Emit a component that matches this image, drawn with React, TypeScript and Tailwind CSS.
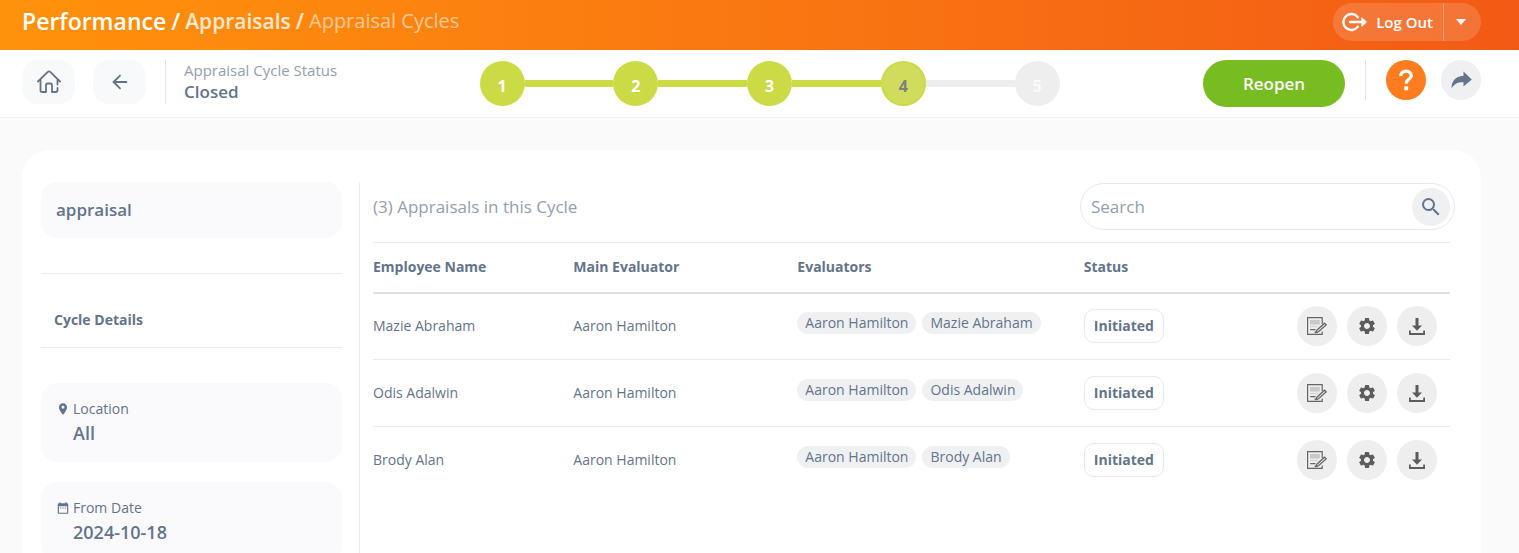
import type { ReactNode } from "react";
import { ArrowLeft } from "lucide-react";
import { MdDateRange, MdLocationOn, MdSearch, MdSettings } from "react-icons/md";

const APPRAISALS = [
    { id: 1, name: "Mazie Abraham", main: "Aaron Hamilton", evaluators: ["Aaron Hamilton", "Mazie Abraham"], status: "Initiated" },
    { id: 2, name: "Odis Adalwin", main: "Aaron Hamilton", evaluators: ["Aaron Hamilton", "Odis Adalwin"], status: "Initiated" },
    { id: 3, name: "Brody Alan", main: "Aaron Hamilton", evaluators: ["Aaron Hamilton", "Brody Alan"], status: "Initiated" },
];

const STEPS = [1, 2, 3, 4, 5];
const CURRENT_STEP = 4;

const HomeIcon = () => (
    <svg viewBox="0 0 24 24" className="h-6 w-6" fill="none" stroke="currentColor" strokeWidth="1.8" strokeLinecap="round" strokeLinejoin="round">
        <path d="M1 11.500 10.800 1.900Q12 .900 13.200 1.900L23 11.500" />
        <path d="M3.500 10V20.500Q3.500 22 5.500 22H9V15.500Q9 13.500 10.500 13.500H13.500Q15 13.500 15 15.500V22H18.500Q20.500 22 20.500 20V17.800M20.500 14.500V10" />
    </svg>
);

const LogOutIcon = () => (
    <svg viewBox="0 0 26 20" className="h-5 w-[26px]" fill="none" stroke="currentColor" strokeWidth="2.4" strokeLinecap="round" strokeLinejoin="round">
        <path d="M15.800 5.200A8 8 0 1 0 15.800 14.800" />
        <path d="M8 10H20" />
        <path d="M20 6.300 24 10 20 13.700Z" fill="currentColor" strokeWidth="1.5" />
    </svg>
);

const ShareIcon = () => (
    <svg viewBox="0 0 21 18" className="h-[18px] w-[21px]" fill="currentColor">
        <path d="M12.500 .500 20.800 8.500 12.500 15.500V11.300C7.500 11 3.500 12.500.600 17.200.500 10.500 4 5.300 12.500 4.800Z" />
    </svg>
);

const QuestionIcon = () => (
    <svg viewBox="0 0 16 22" className="h-[22px] w-4" fill="none" stroke="currentColor">
        <path d="M2.700 7.200C2.400 4 5 2.200 8 2.200S13.500 4 13.300 6.800C13 10 8.200 10.500 8.200 14.700" strokeWidth="3.200" />
        <path d="M8.200 17.300V21.300" strokeWidth="3.800" />
    </svg>
);

const FormIcon = () => (
    <svg viewBox="0 0 20 18" className="h-[18px] w-5" fill="none" stroke="#666" strokeWidth="1.2">
        <path d="M15.200 7V.600H.600V17.400H15.200V14.500" />
        <path d="M3 3H12.800V7.500H3Z" fill="#c8c8c8" stroke="none" />
        <path d="M3 9.500H11.500" stroke="#d4d4d4" />
        <path d="M3.200 12.700H8.500M7.500 15.200H11" />
        <path d="M9.800 13.200 17.500 6.200 19.200 7.900 11.500 14.800 9 15.500Z" fill="#ddd" />
    </svg>
);

const DownloadIcon = () => (
    <svg viewBox="0 0 16 17" className="h-[17px] w-4" fill="currentColor">
        <path d="M6.500 0H9.500V7.500H13L8 12.700 3 7.500H6.500Z" />
        <path d="M0 12.500H1.800V15H14.200V12.500H16V17H0Z" />
    </svg>
);

const Header = () => (
    <header className="flex h-[50px] shrink-0 items-start justify-between bg-linear-to-r from-[#ff920b] to-[#f35a15] pr-[38px] pl-[22px]">
        <nav aria-label="Breadcrumb" className="flex items-center gap-[5px] pt-[7px] leading-7 font-semibold">
            <a href="#performance" className="text-[23px] text-white">Performance</a>
            <span className="text-[23px] text-white">/</span>
            <a href="#appraisals" className="text-[21px] text-white/80">Appraisals</a>
            <span className="text-[21px] text-white/80">/</span>
            <a href="#cycles" className="text-[20px] font-medium text-white/55">Appraisal Cycles</a>
        </nav>
        <div className="mt-[3px] flex h-[38px] overflow-hidden rounded-full bg-white/15 text-white">
            <button className="flex items-center gap-2 pr-2.5 pl-[9px] text-[15px] font-semibold">
                <LogOutIcon />
                Log Out
            </button>
            <button aria-label="Account options" className="flex w-[38px] items-center border-l border-white/30 pl-3">
                <svg viewBox="0 0 10 6" className="h-1.5 w-2.5" fill="currentColor"><path d="M0 0H10L5 6Z" /></svg>
            </button>
        </div>
    </header>
);

const Stepper = () => (
    <ol className="mt-[11px] ml-9 flex w-[580px] items-center">
        {STEPS.map((step) => {
            const isDone = step < CURRENT_STEP;
            const isCurrent = step === CURRENT_STEP;

            return (
                <li key={step} className={`flex items-center ${step > 1 ? "flex-1" : ""}`}>
                    {step > 1 && <span className={`h-[7px] flex-1 ${isDone || isCurrent ? "bg-[#cbdb45]" : "bg-[#eee]"}`} />}
                    <span
                        className={`flex h-[45px] w-[45px] items-center justify-center rounded-full pt-1 text-base font-bold ${isDone
                            ? "bg-[#cbdb45] text-white"
                            : isCurrent
                                ? "border-2 border-[#cbdb45] bg-[#d0dd5c] text-[#808080]"
                                : "bg-[#eee] text-[#fafafa]"
                            }`}
                    >
                        {step}
                    </span>
                </li>
            );
        })}
    </ol>
);

const Toolbar = () => (
    <div className="flex h-[68px] shrink-0 items-start border-b border-[#f0f0f0] bg-white pr-[38px] pl-[22px]">
        <div className="mt-2.5 flex flex-1 items-center">
            <button aria-label="Home" className="flex h-11 w-[53px] items-center justify-center rounded-2xl bg-[#f8f9fb]">
                <HomeIcon />
            </button>
            <button aria-label="Back" className="ml-[18px] flex h-11 w-[53px] items-center justify-center rounded-2xl bg-[#f8f9fb]">
                <ArrowLeft className="h-[22px] w-[22px]" />
            </button>
            <div className="ml-[19px] h-11 border-l border-[#e4e5e8] pl-[18px]">
                <p className="text-[15px] leading-5 text-[#93a0ae]">Appraisal Cycle Status</p>
                <p className="text-[17px] leading-6 font-semibold">Closed</p>
            </div>
        </div>
        <Stepper />
        <div className="mt-2.5 flex flex-1 items-start justify-end">
            <button className="h-[47px] w-[142px] rounded-full bg-[#77bc21] text-[17px] font-semibold text-white">Reopen</button>
            <div className="ml-5 flex gap-[15px] border-l border-[#e4e5e8] pl-5">
                <button aria-label="Help" className="flex h-10 w-10 items-center justify-center rounded-full bg-[#ff7d1e] text-white">
                    <QuestionIcon />
                </button>
                <button aria-label="Share" className="flex h-10 w-10 items-center justify-center rounded-full bg-[#eff0f2]">
                    <ShareIcon />
                </button>
            </div>
        </div>
    </div>
);

const DetailCard = ({ icon, label, value }: { icon: ReactNode; label: string; value: string }) => (
    <div className="mb-5 h-[79px] rounded-2xl bg-[#fafafc] pt-4 pl-[15px]">
        <div className="flex items-center gap-[3px] text-sm leading-5">
            {icon}
            {label}
        </div>
        <p className="ml-[17px] text-lg leading-7 font-semibold">{value}</p>
    </div>
);

const Sidebar = () => (
    <aside className="w-[301px] shrink-0">
        <div className="mb-[35px] rounded-2xl bg-[#fafafc] px-[15px] py-4 text-[17px] leading-6 font-semibold">appraisal</div>
        <h2 className="mb-[35px] border-y border-[#ededf0] px-[13px] pt-9 pb-[17px] text-sm leading-5 font-bold">Cycle Details</h2>
        <DetailCard icon={<MdLocationOn className="h-3.5 w-3.5" />} label="Location" value="All" />
        <DetailCard icon={<MdDateRange className="h-3.5 w-3.5" />} label="From Date" value="2024-10-18" />
    </aside>
);

const RoundButton = ({ label, children }: { label: string; children: ReactNode }) => (
    <button aria-label={label} className="flex h-10 w-10 items-center justify-center rounded-full bg-[#eee] text-[#5c5c5c]">
        {children}
    </button>
);

const AppraisalTable = () => (
    <table className="w-full table-fixed text-left text-sm">
        <colgroup>
            <col className="w-[18.6%]" />
            <col className="w-[20.8%]" />
            <col className="w-[26.6%]" />
            <col />
            <col className="w-[153px]" />
        </colgroup>
        <thead>
            <tr className="h-[50px] border-t border-b-2 border-t-[#e8e9ed] border-b-[#dee0e5]">
                <th className="font-bold">Employee Name</th>
                <th className="font-bold">Main Evaluator</th>
                <th className="font-bold">Evaluators</th>
                <th className="font-bold">Status</th>
                <th aria-label="Actions" />
            </tr>
        </thead>
        <tbody>
            {APPRAISALS.map((row) => (
                <tr key={row.id} className="h-[67px] border-b border-[#e8e9ed] last:border-b-0">
                    <td>{row.name}</td>
                    <td>{row.main}</td>
                    <td>
                        <div className="mb-1.5 flex gap-1.5">
                            {row.evaluators.map((person) => (
                                <span key={person} className="rounded-full bg-[#eff0f2] px-2 leading-[22px] whitespace-nowrap">{person}</span>
                            ))}
                        </div>
                    </td>
                    <td>
                        <span className="inline-flex h-[34px] items-center rounded-[10px] border border-[#e8e8f0] px-[9px] font-bold">{row.status}</span>
                    </td>
                    <td>
                        <div className="flex gap-2.5">
                            <RoundButton label="Open form"><FormIcon /></RoundButton>
                            <RoundButton label="Settings"><MdSettings className="h-5 w-5" /></RoundButton>
                            <RoundButton label="Download"><DownloadIcon /></RoundButton>
                        </div>
                    </td>
                </tr>
            ))}
        </tbody>
    </table>
);

const App = () => {
    return (
        <div className="flex h-screen flex-col overflow-hidden bg-[#fafafa] font-['Open_Sans',sans-serif] text-[#64748b]">
            <Header />
            <Toolbar />
            <main className="mt-8 mr-[38px] ml-[22px] flex min-h-0 flex-1 overflow-hidden rounded-t-[28px] bg-white pt-8 pr-[26px] pl-[19px]">
                <Sidebar />
                <section className="ml-[17px] flex-1 border-l border-[#ededf0] pl-[13px]">
                    <div className="mb-3 flex items-center justify-between pt-px">
                        <h1 className="text-[17px] font-medium text-[#93a0ae]">(3) Appraisals in this Cycle</h1>
                        <div className="flex h-[47px] w-[375px] items-center rounded-full border border-[#e8e8ec] pr-1 pl-2.5">
                            <input type="text" aria-label="Search appraisals" placeholder="Search" className="min-w-0 flex-1 text-[17px] outline-none placeholder:text-[#93a0ae]" />
                            <button aria-label="Search" className="flex h-[38px] w-[38px] items-center justify-center rounded-full bg-[#eff0f2]">
                                <MdSearch className="h-6 w-6" />
                            </button>
                        </div>
                    </div>
                    <div className="pr-[5px]">
                        <AppraisalTable />
                    </div>
                </section>
            </main>
        </div>
    );
};

export default App;
